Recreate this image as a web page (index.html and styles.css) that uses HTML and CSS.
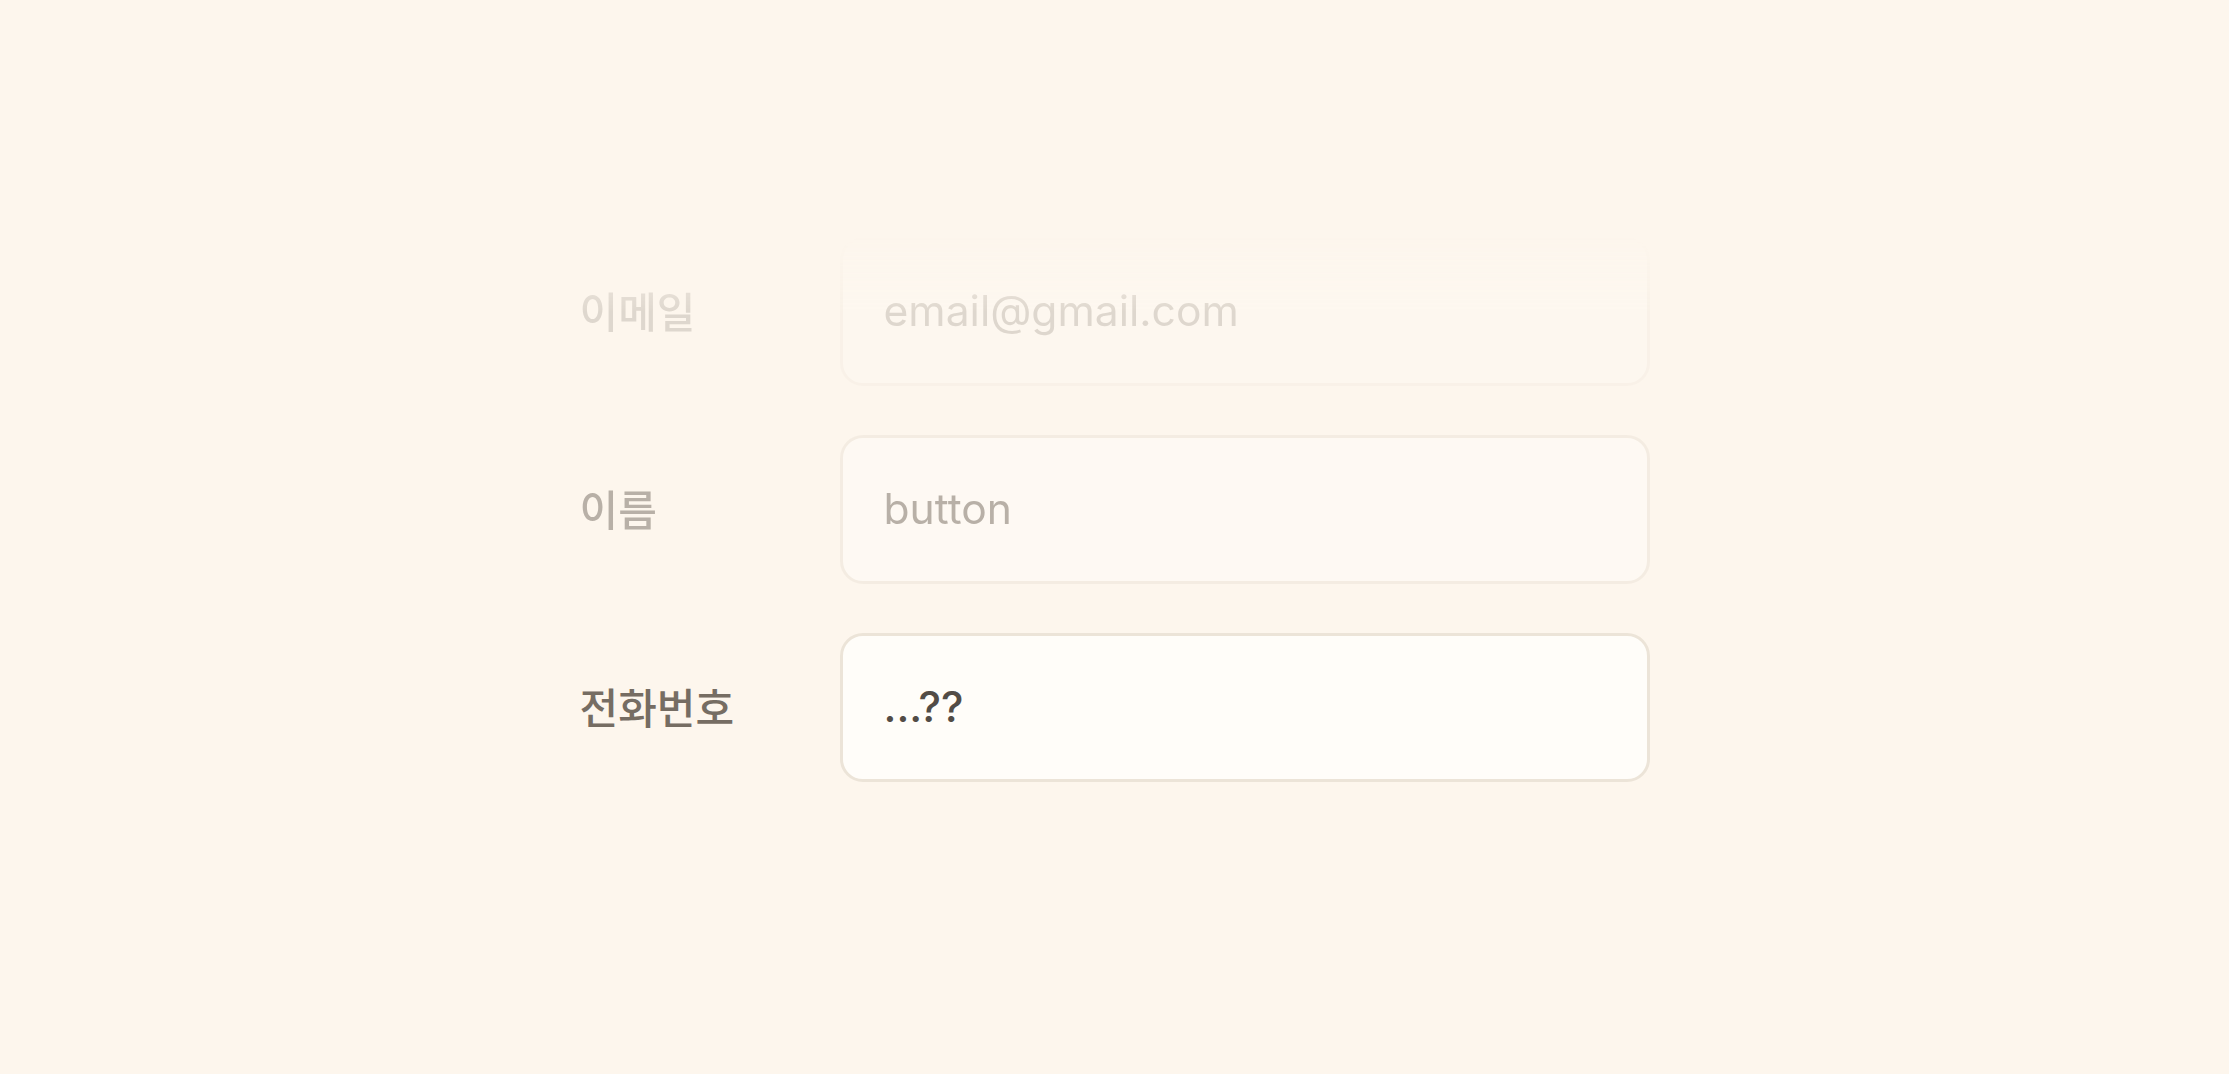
FILE: index.html
```html
<!DOCTYPE html>
<html lang="ko">
<head>
    <meta charset="UTF-8">
    <meta name="viewport" content="width=device-width, initial-scale=1.0">
    <title>Form Picker</title>
    <link rel="stylesheet" href="styles.css">
</head>
<body>
    <div class="form-list">
        <div class="form-row row-far">
            <label class="row-label" for="email">이메일</label>
            <input class="row-input" id="email" type="text" placeholder="email@gmail.com">
        </div>
        <div class="form-row row-near">
            <label class="row-label" for="name">이름</label>
            <input class="row-input" id="name" type="text" value="button">
        </div>
        <div class="form-row row-active">
            <label class="row-label" for="phone">전화번호</label>
            <input class="row-input" id="phone" type="text" value="...??">
        </div>
    </div>
</body>
</html>
```

FILE: styles.css
```css
* {
    margin: 0;
    padding: 0;
    box-sizing: border-box;
}
body {
    background-color: #fdf6ed;
    font-family: 'Inter', 'Noto Sans CJK KR', sans-serif;
}
.form-list {
    width: 1070px;
    margin: 0 auto;
    padding-top: 237px;
    display: flex;
    flex-direction: column;
    gap: 49px;
}
.form-row {
    display: flex;
    align-items: center;
}
.row-label {
    width: 260px;
    margin-top: -4px;
    font-family: 'Noto Sans CJK KR', sans-serif;
    font-size: 42px;
    font-weight: 500;
    color: #766d63;
}
.row-input {
    width: 810px;
    height: 149px;
    padding: 0 41px 2px;
    border: 3px solid #ece4d8;
    border-radius: 23px;
    background-color: #fffdf9;
    font-family: 'Inter', sans-serif;
    font-size: 42.6px;
    font-weight: 400;
    color: #766d63;
    outline: none;
}
.row-input::placeholder {
    color: #766d63;
    opacity: 1;
}
.row-active .row-input {
    font-weight: 500;
    color: #524c46;
}
.row-near {
    opacity: 0.5;
}
.row-far {
    opacity: 0.22;
    -webkit-mask-image: linear-gradient(to bottom, rgba(0,0,0,0) 0, #000 50%);
    mask-image: linear-gradient(to bottom, rgba(0,0,0,0) 0, #000 50%);
}
```
